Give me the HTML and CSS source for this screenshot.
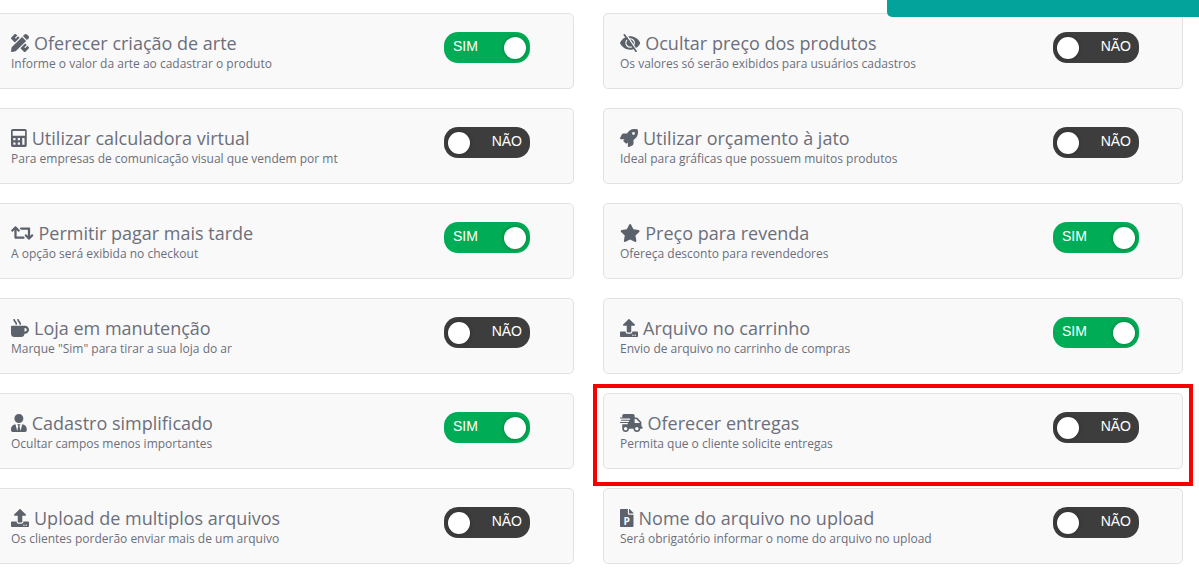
FILE: index.html
```html
<!DOCTYPE html>
<html lang="pt-BR">
<head>
    <meta charset="UTF-8">
    <meta name="viewport" content="width=device-width, initial-scale=1.0">
    <title>Configurações da loja</title>
    <link rel="stylesheet" href="styles.css">
</head>
<body>
    <div class="notice"></div>

    <main class="options">
        <div class="card">
            <div class="info">
                <label class="title" for="arte">
                    <svg class="icon" viewBox="0 0 512 512"><path d="M109.46 244.04l134.58-134.56-44.12-44.12-61.68 61.68a7.919 7.919 0 0 1-11.21 0l-11.21-11.21c-3.1-3.1-3.1-8.12 0-11.21l61.68-61.68-33.64-33.65C131.47-3.1 111.39-3.1 99 9.29L9.29 99c-12.38 12.39-12.39 32.47 0 44.86l100.17 100.18zm388.47-116.8c18.76-18.76 18.75-49.17 0-67.93l-45.25-45.25c-18.76-18.76-49.18-18.76-67.95 0l-46.02 46.01 113.2 113.2 46.02-46.03zM316.08 82.71l-297 296.96L.32 487.11c-2.53 14.49 10.09 27.11 24.59 24.56l107.45-18.84L429.28 195.9 316.08 82.71zm186.63 285.43l-33.64-33.64-61.68 61.68c-3.1 3.1-8.12 3.1-11.21 0l-11.21-11.21c-3.09-3.1-3.09-8.12 0-11.21l61.68-61.68-44.14-44.14L267.93 402.5l100.21 100.2c12.39 12.39 32.47 12.39 44.86 0l89.71-89.7c12.39-12.39 12.39-32.47 0-44.86z"/></svg>
                    Oferecer criação de arte
                </label>
                <p class="help">Informe o valor da arte ao cadastrar o produto</p>
            </div>
            <div class="toggle">
                <input type="checkbox" id="arte" checked>
                <span class="on">SIM</span><span class="off">NÃO</span><span class="knob"></span>
            </div>
        </div>

        <div class="card">
            <div class="info">
                <label class="title" for="preco">
                    <svg class="icon" viewBox="0 0 576 512"><path fill-rule="evenodd" d="M288 64C165 64 59 134 4 241a32 32 0 0 0 0 30c55 107 161 177 284 177s229-70 284-177a32 32 0 0 0 0-30C517 134 411 64 288 64zm0 56a136 136 0 1 1 0 272 136 136 0 0 1 0-272zm0 32a104 104 0 1 0 .1 0z"/><path class="gap" d="M164-10L498 500"/><path class="slash" d="M122 24L456 490"/></svg>
                    Ocultar preço dos produtos
                </label>
                <p class="help">Os valores só serão exibidos para usuários cadastros</p>
            </div>
            <div class="toggle">
                <input type="checkbox" id="preco">
                <span class="on">SIM</span><span class="off">NÃO</span><span class="knob"></span>
            </div>
        </div>

        <div class="card">
            <div class="info">
                <label class="title" for="calculadora">
                    <svg class="icon" viewBox="0 0 448 512"><path fill-rule="evenodd" d="M48 0h352a48 48 0 0 1 48 48v416a48 48 0 0 1-48 48H48a48 48 0 0 1-48-48V48A48 48 0 0 1 48 0zm0 56v136h352V56zm16 200v64h64v-64zm128 0v64h64v-64zm128 0v192h64V256zM64 384v64h64v-64zm128 0v64h64v-64z"/></svg>
                    Utilizar calculadora virtual
                </label>
                <p class="help">Para empresas de comunicação visual que vendem por mt</p>
            </div>
            <div class="toggle">
                <input type="checkbox" id="calculadora">
                <span class="on">SIM</span><span class="off">NÃO</span><span class="knob"></span>
            </div>
        </div>

        <div class="card">
            <div class="info">
                <label class="title" for="orcamento">
                    <svg class="icon" viewBox="0 0 512 512"><path d="M505.12 19.09c-1.19-5.53-6.66-11-12.21-12.18C460.72 0 435.5 0 410.4 0 307.18 0 245.27 55.2 199.05 128H94.84c-16.35 0-35.56 11.87-42.89 26.48L2.52 253.3A28.4 28.4 0 0 0 0 264a24 24 0 0 0 24 24h103.82l-22.48 22.47c-11.36 11.36-13 32.26 0 45.25l50.9 50.9c11.16 11.2 32.16 13.16 45.28 0L224 384.16V488a24 24 0 0 0 24 24 28.56 28.56 0 0 0 10.7-2.52l98.74-49.39c14.62-7.3 26.5-26.5 26.5-42.86V312.8c72.6-46.31 128.04-108.4 128.04-211.1 0-25.2 0-50.4-6.86-82.61zM384.04 168a40 40 0 1 1 40-40 40 40 0 0 1-40 40z"/></svg>
                    Utilizar orçamento à jato
                </label>
                <p class="help">Ideal para gráficas que possuem muitos produtos</p>
            </div>
            <div class="toggle">
                <input type="checkbox" id="orcamento">
                <span class="on">SIM</span><span class="off">NÃO</span><span class="knob"></span>
            </div>
        </div>

        <div class="card">
            <div class="info">
                <label class="title" for="pagar">
                    <svg class="icon" viewBox="0 0 640 512"><path d="M629.657 343.598L528.971 444.284c-9.373 9.372-24.568 9.372-33.941 0L394.343 343.598c-9.373-9.373-9.373-24.569 0-33.941l10.823-10.823c9.562-9.562 25.133-9.34 34.419.492L480 342.118V160H292.451a24.005 24.005 0 0 1-16.971-7.029l-16-16C244.361 121.851 255.069 96 276.451 96H520c13.255 0 24 10.745 24 24v222.118l40.416-42.792c9.285-9.831 24.856-10.054 34.419-.492l10.823 10.823c9.372 9.372 9.372 24.569-.001 33.941zm-265.138 15.431A23.999 23.999 0 0 0 347.548 352H160V169.881l40.416 42.792c9.286 9.831 24.856 10.054 34.419.491l10.822-10.822c9.373-9.373 9.373-24.569 0-33.941L144.971 67.716c-9.373-9.373-24.569-9.373-33.941 0L10.343 168.402c-9.373 9.373-9.373 24.569 0 33.941l10.822 10.822c9.562 9.562 25.133 9.34 34.419-.491L96 169.881V392c0 13.255 10.745 24 24 24h243.549c21.382 0 32.09-25.851 16.971-40.971l-16.001-16z"/></svg>
                    Permitir pagar mais tarde
                </label>
                <p class="help">A opção será exibida no checkout</p>
            </div>
            <div class="toggle">
                <input type="checkbox" id="pagar" checked>
                <span class="on">SIM</span><span class="off">NÃO</span><span class="knob"></span>
            </div>
        </div>

        <div class="card">
            <div class="info">
                <label class="title" for="revenda">
                    <svg class="icon" viewBox="0 0 576 512"><path d="M259.3 17.8L194 150.2 47.9 171.5c-26.2 3.8-36.7 36.1-17.7 54.6l105.7 103-25 145.5c-4.5 26.3 23.2 46 46.4 33.7L288 439.6l130.7 68.7c23.2 12.2 50.9-7.4 46.4-33.7l-25-145.5 105.7-103c19-18.5 8.5-50.8-17.7-54.6L382 150.2 316.7 17.8c-11.7-23.6-45.6-23.9-57.4 0z"/></svg>
                    Preço para revenda
                </label>
                <p class="help">Ofereça desconto para revendedores</p>
            </div>
            <div class="toggle">
                <input type="checkbox" id="revenda" checked>
                <span class="on">SIM</span><span class="off">NÃO</span><span class="knob"></span>
            </div>
        </div>

        <div class="card">
            <div class="info">
                <label class="title" for="manutencao">
                    <svg class="icon" viewBox="0 0 512 512"><path d="M127.1 146.5c1.3 7.7 8 13.5 16 13.5h16.5c9.8 0 17.6-8.5 16.3-18-3.8-28.2-16.4-54.2-36.6-74.7-14.4-14.7-23.6-33.3-26.4-53.5C111.8 5.9 105 0 96.8 0H80.4C70.6 0 63 8.5 64.1 18c3.9 31.9 18 61.3 40.6 84.4 12 12.2 19.7 27.5 22.4 44.1zm112 0c1.3 7.7 8 13.5 16 13.5h16.5c9.8 0 17.6-8.5 16.3-18-3.8-28.2-16.4-54.2-36.6-74.7-14.4-14.7-23.6-33.3-26.4-53.5C223.8 5.9 217 0 208.8 0h-16.4c-9.8 0-17.5 8.5-16.3 18 3.9 31.9 18 61.3 40.6 84.4 12 12.2 19.7 27.5 22.4 44.1zM400 192H32c-17.7 0-32 14.3-32 32v192c0 53 43 96 96 96h192c53 0 96-43 96-96h16c61.8 0 112-50.2 112-112s-50.2-112-112-112zm0 160h-16v-96h16c26.5 0 48 21.5 48 48s-21.5 48-48 48z"/></svg>
                    Loja em manutenção
                </label>
                <p class="help">Marque "Sim" para tirar a sua loja do ar</p>
            </div>
            <div class="toggle">
                <input type="checkbox" id="manutencao">
                <span class="on">SIM</span><span class="off">NÃO</span><span class="knob"></span>
            </div>
        </div>

        <div class="card">
            <div class="info">
                <label class="title" for="carrinho">
                    <svg class="icon" viewBox="0 0 512 512"><path d="M296 384h-80c-13.3 0-24-10.7-24-24V192h-87.7c-17.8 0-26.7-21.5-14.1-34.1L242.3 5.7c7.5-7.5 19.8-7.5 27.3 0l152.2 152.2c12.6 12.6 3.7 34.1-14.1 34.1H320v168c0 13.3-10.7 24-24 24zm216-8v112c0 13.3-10.7 24-24 24H24c-13.3 0-24-10.7-24-24V376c0-13.3 10.7-24 24-24h136v8c0 30.9 25.1 56 56 56h80c30.9 0 56-25.1 56-56v-8h136c13.3 0 24 10.7 24 24zm-124 88c0-11-9-20-20-20s-20 9-20 20 9 20 20 20 20-9 20-20zm64 0c0-11-9-20-20-20s-20 9-20 20 9 20 20 20 20-9 20-20z"/></svg>
                    Arquivo no carrinho
                </label>
                <p class="help">Envio de arquivo no carrinho de compras</p>
            </div>
            <div class="toggle">
                <input type="checkbox" id="carrinho" checked>
                <span class="on">SIM</span><span class="off">NÃO</span><span class="knob"></span>
            </div>
        </div>

        <div class="card">
            <div class="info">
                <label class="title" for="cadastro">
                    <svg class="icon" viewBox="0 0 448 512"><path d="M224 256c70.7 0 128-57.3 128-128S294.7 0 224 0 96 57.3 96 128s57.3 128 128 128zm95.8 32.6L272 480l-32-136 32-56h-96l32 56-32 136-47.8-191.4C56.9 292 0 350.3 0 422.4V464c0 26.5 21.5 48 48 48h352c26.5 0 48-21.5 48-48v-41.6c0-72.1-56.9-130.4-128.2-133.8z"/></svg>
                    Cadastro simplificado
                </label>
                <p class="help">Ocultar campos menos importantes</p>
            </div>
            <div class="toggle">
                <input type="checkbox" id="cadastro" checked>
                <span class="on">SIM</span><span class="off">NÃO</span><span class="knob"></span>
            </div>
        </div>

        <div class="card highlight">
            <div class="info">
                <label class="title" for="entregas">
                    <svg class="icon" viewBox="0 0 640 512"><path d="M624 352h-16V243.9c0-12.7-5.1-24.9-14.1-33.9L494 110.1c-9-9-21.2-14.1-33.9-14.1H416V48c0-26.5-21.5-48-48-48H112C85.5 0 64 21.5 64 48v48H8c-4.4 0-8 3.6-8 8v16c0 4.4 3.6 8 8 8h272c4.4 0 8 3.6 8 8v16c0 4.4-3.6 8-8 8H40c-4.4 0-8 3.6-8 8v16c0 4.4 3.6 8 8 8h208c4.4 0 8 3.6 8 8v16c0 4.4-3.6 8-8 8H8c-4.4 0-8 3.6-8 8v16c0 4.4 3.6 8 8 8h208c4.4 0 8 3.6 8 8v16c0 4.4-3.6 8-8 8H64v128c0 53 43 96 96 96s96-43 96-96h128c0 53 43 96 96 96s96-43 96-96h48c8.8 0 16-7.2 16-16v-32c0-8.8-7.2-16-16-16zM160 464c-26.5 0-48-21.5-48-48s21.5-48 48-48 48 21.5 48 48-21.5 48-48 48zm320 0c-26.5 0-48-21.5-48-48s21.5-48 48-48 48 21.5 48 48-21.5 48-48 48zm80-208H416V144h44.1l99.9 99.9V256z"/></svg>
                    Oferecer entregas
                </label>
                <p class="help">Permita que o cliente solicite entregas</p>
            </div>
            <div class="toggle">
                <input type="checkbox" id="entregas">
                <span class="on">SIM</span><span class="off">NÃO</span><span class="knob"></span>
            </div>
        </div>

        <div class="card">
            <div class="info">
                <label class="title" for="multiplos">
                    <svg class="icon" viewBox="0 0 512 512"><path d="M296 384h-80c-13.3 0-24-10.7-24-24V192h-87.7c-17.8 0-26.7-21.5-14.1-34.1L242.3 5.7c7.5-7.5 19.8-7.5 27.3 0l152.2 152.2c12.6 12.6 3.7 34.1-14.1 34.1H320v168c0 13.3-10.7 24-24 24zm216-8v112c0 13.3-10.7 24-24 24H24c-13.3 0-24-10.7-24-24V376c0-13.3 10.7-24 24-24h136v8c0 30.9 25.1 56 56 56h80c30.9 0 56-25.1 56-56v-8h136c13.3 0 24 10.7 24 24zm-124 88c0-11-9-20-20-20s-20 9-20 20 9 20 20 20 20-9 20-20zm64 0c0-11-9-20-20-20s-20 9-20 20 9 20 20 20 20-9 20-20z"/></svg>
                    Upload de multiplos arquivos
                </label>
                <p class="help">Os clientes porderão enviar mais de um arquivo</p>
            </div>
            <div class="toggle">
                <input type="checkbox" id="multiplos">
                <span class="on">SIM</span><span class="off">NÃO</span><span class="knob"></span>
            </div>
        </div>

        <div class="card">
            <div class="info">
                <label class="title" for="nome">
                    <svg class="icon" viewBox="0 0 384 512" aria-hidden="true"><path d="M377 105L279 7c-4.5-4.5-10.6-7-17-7h-6v128h128v-6.1c0-6.3-2.5-12.4-7-16.9zM224 136V0H24C10.7 0 0 10.7 0 24v464c0 13.3 10.7 24 24 24h336c13.3 0 24-10.7 24-24V160H248c-13.2 0-24-10.8-24-24z"/><text class="file-letter" x="96" y="446">P</text></svg>
                    Nome do arquivo no upload
                </label>
                <p class="help">Será obrigatório informar o nome do arquivo no upload</p>
            </div>
            <div class="toggle">
                <input type="checkbox" id="nome">
                <span class="on">SIM</span><span class="off">NÃO</span><span class="knob"></span>
            </div>
        </div>
    </main>
</body>
</html>
```
FILE: styles.css
```css
body {
    font-family: "Open Sans", Arial, sans-serif;
    margin: 0;
    background: #fff;
    color: #6c6f7b;
}
.options {
    display: grid;
    grid-template-columns: 1fr 1fr;
    gap: 19px 29px;
    margin: 13px 16px 0 -6px; /* first column runs off the left edge */
}
.card {
    position: relative;
    display: flex;
    justify-content: space-between;
    align-items: flex-start;
    padding: 17px 43px 15px 16px;
    border: 1px solid #e2e2e2;
    border-radius: 5px;
    background: #f9f9f9;
}
.title {
    display: flex;
    align-items: center;
    gap: 5px;
    font-size: 18px;
    line-height: 24px;
}
.icon {
    height: 18px;
    fill: #5b626b;
}
.gap {
    stroke: #f9f9f9;
    stroke-width: 40;
}
.slash {
    stroke: #5b626b;
    stroke-width: 48;
    stroke-linecap: round;
}
.file-letter {
    font: bold 290px "Open Sans", sans-serif;
    fill: #f9f9f9;
}
.help {
    margin: 0;
    font-size: 12px;
    line-height: 18px;
}

/* SIM / NÃO switch */
.toggle {
    position: relative;
    display: flex;
    justify-content: space-between;
    align-items: center;
    box-sizing: border-box;
    width: 86px;
    height: 31px;
    margin-top: 1px;
    padding: 0 4px 0 9px;
    font-family: "Liberation Sans", Arial, sans-serif;
    font-size: 14px;
    line-height: 28px;
    color: #fff;
}
.toggle input {
    appearance: none;
    position: absolute;
    inset: 0;
    margin: 0;
    border-radius: 14px;
    background: #3d3d3d;
    cursor: pointer;
}
.toggle input:checked {
    background: #00ac56;
}
.toggle span {
    position: relative;
    pointer-events: none;
}
.on, .off {
    padding-bottom: 3px;
}
.off {
    display: none;
}
.knob {
    width: 22px;
    height: 22px;
    border-radius: 50%;
    background: #fff;
    box-shadow: 0 0 4px rgba(0, 0, 0, 0.3);
}
.toggle:has(input:not(:checked)) {
    flex-direction: row-reverse;
    padding: 0 8px 0 4px;
}
input:not(:checked) ~ .on {
    display: none;
}
input:not(:checked) ~ .off {
    display: block;
}

/* red frame round the delivery option */
.highlight::after {
    content: "";
    position: absolute;
    inset: -10px -11px -18px -11px;
    border: 4px solid #f60000;
    pointer-events: none;
    z-index: 1;
}
.notice {
    position: absolute;
    top: 0;
    right: 0;
    width: 26%;
    height: 17px;
    border-bottom-left-radius: 5px;
    background: #03a39b;
    z-index: 2;
}
```
